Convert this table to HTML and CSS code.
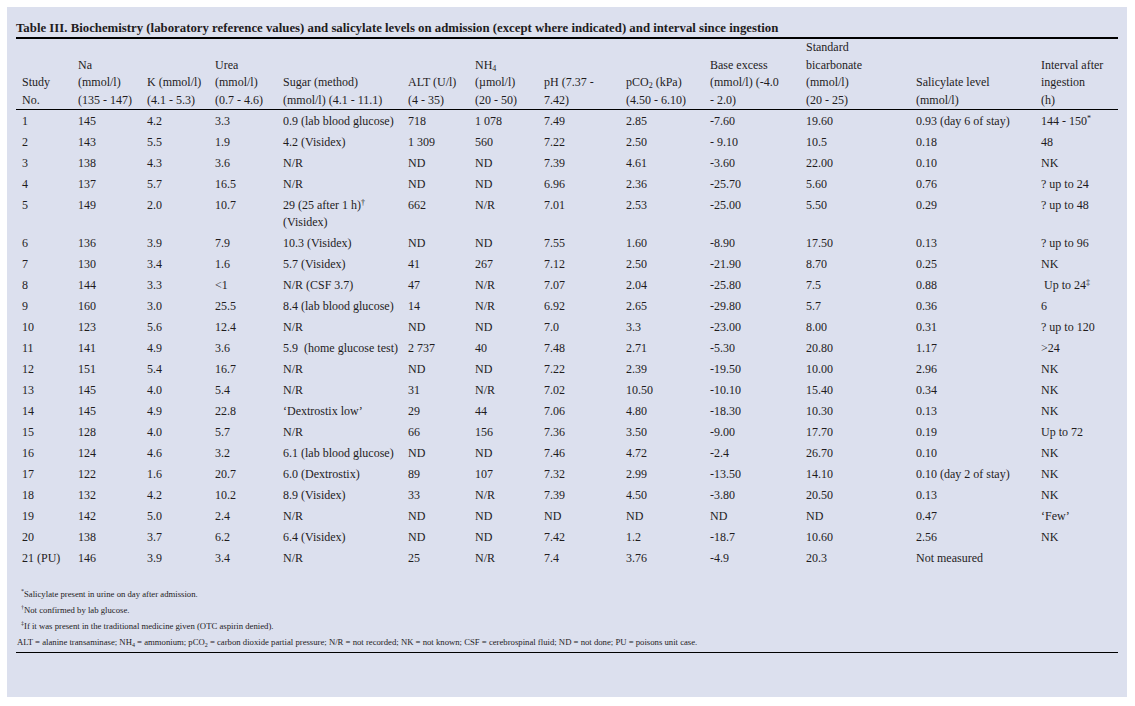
FILE: index.html
```html
<!DOCTYPE html>
<html>
<head>
<meta charset="utf-8">
<link rel="stylesheet" href="styles.css">
</head>
<body>
<div class="panel">
  <div class="title">Table III. Biochemistry (laboratory reference values) and salicylate levels on admission (except where indicated) and interval since ingestion</div>
  <table class="data">
    <colgroup>
      <col class="c1"><col class="c2"><col class="c3"><col class="c4"><col class="c5"><col class="c6"><col class="c7"><col class="c8"><col class="c9"><col class="c10"><col class="c11"><col class="c12"><col class="c13">
    </colgroup>
    <thead>
      <tr>
        <th>Study<br>No.</th>
        <th>Na<br>(mmol/l)<br>(135 - 147)</th>
        <th>K (mmol/l)<br>(4.1 - 5.3)</th>
        <th>Urea<br>(mmol/l)<br>(0.7 - 4.6)</th>
        <th>Sugar (method)<br>(mmol/l) (4.1 - 11.1)</th>
        <th>ALT (U/l)<br>(4 - 35)</th>
        <th>NH<sub>4</sub><br>(µmol/l)<br>(20 - 50)</th>
        <th>pH (7.37 -<br>7.42)</th>
        <th>pCO<sub>2</sub> (kPa)<br>(4.50 - 6.10)</th>
        <th>Base excess<br>(mmol/l) (-4.0<br>- 2.0)</th>
        <th>Standard<br>bicarbonate<br>(mmol/l)<br>(20 - 25)</th>
        <th>Salicylate level<br>(mmol/l)</th>
        <th>Interval after<br>ingestion<br>(h)</th>
      </tr>
    </thead>
    <tbody>
      <tr><td>1</td><td>145</td><td>4.2</td><td>3.3</td><td>0.9 (lab blood glucose)</td><td>718</td><td>1 078</td><td>7.49</td><td>2.85</td><td>-7.60</td><td>19.60</td><td>0.93 (day 6 of stay)</td><td>144 - 150<sup class="ast">*</sup></td></tr>
      <tr><td>2</td><td>143</td><td>5.5</td><td>1.9</td><td>4.2 (Visidex)</td><td>1 309</td><td>560</td><td>7.22</td><td>2.50</td><td>- 9.10</td><td>10.5</td><td>0.18</td><td>48</td></tr>
      <tr><td>3</td><td>138</td><td>4.3</td><td>3.6</td><td>N/R</td><td>ND</td><td>ND</td><td>7.39</td><td>4.61</td><td>-3.60</td><td>22.00</td><td>0.10</td><td>NK</td></tr>
      <tr><td>4</td><td>137</td><td>5.7</td><td>16.5</td><td>N/R</td><td>ND</td><td>ND</td><td>6.96</td><td>2.36</td><td>-25.70</td><td>5.60</td><td>0.76</td><td>? up to 24</td></tr>
      <tr><td>5</td><td>149</td><td>2.0</td><td>10.7</td><td>29 (25 after 1 h)<sup>†</sup><br>(Visidex)</td><td>662</td><td>N/R</td><td>7.01</td><td>2.53</td><td>-25.00</td><td>5.50</td><td>0.29</td><td>? up to 48</td></tr>
      <tr><td>6</td><td>136</td><td>3.9</td><td>7.9</td><td>10.3 (Visidex)</td><td>ND</td><td>ND</td><td>7.55</td><td>1.60</td><td>-8.90</td><td>17.50</td><td>0.13</td><td>? up to 96</td></tr>
      <tr><td>7</td><td>130</td><td>3.4</td><td>1.6</td><td>5.7 (Visidex)</td><td>41</td><td>267</td><td>7.12</td><td>2.50</td><td>-21.90</td><td>8.70</td><td>0.25</td><td>NK</td></tr>
      <tr><td>8</td><td>144</td><td>3.3</td><td>&lt;1</td><td>N/R (CSF 3.7)</td><td>47</td><td>N/R</td><td>7.07</td><td>2.04</td><td>-25.80</td><td>7.5</td><td>0.88</td><td class="indent">Up to 24<sup>‡</sup></td></tr>
      <tr><td>9</td><td>160</td><td>3.0</td><td>25.5</td><td>8.4 (lab blood glucose)</td><td>14</td><td>N/R</td><td>6.92</td><td>2.65</td><td>-29.80</td><td>5.7</td><td>0.36</td><td>6</td></tr>
      <tr><td>10</td><td>123</td><td>5.6</td><td>12.4</td><td>N/R</td><td>ND</td><td>ND</td><td>7.0</td><td>3.3</td><td>-23.00</td><td>8.00</td><td>0.31</td><td>? up to 120</td></tr>
      <tr><td>11</td><td>141</td><td>4.9</td><td>3.6</td><td>5.9&nbsp; (home glucose test)</td><td>2 737</td><td>40</td><td>7.48</td><td>2.71</td><td>-5.30</td><td>20.80</td><td>1.17</td><td>&gt;24</td></tr>
      <tr><td>12</td><td>151</td><td>5.4</td><td>16.7</td><td>N/R</td><td>ND</td><td>ND</td><td>7.22</td><td>2.39</td><td>-19.50</td><td>10.00</td><td>2.96</td><td>NK</td></tr>
      <tr><td>13</td><td>145</td><td>4.0</td><td>5.4</td><td>N/R</td><td>31</td><td>N/R</td><td>7.02</td><td>10.50</td><td>-10.10</td><td>15.40</td><td>0.34</td><td>NK</td></tr>
      <tr><td>14</td><td>145</td><td>4.9</td><td>22.8</td><td>‘Dextrostix low’</td><td>29</td><td>44</td><td>7.06</td><td>4.80</td><td>-18.30</td><td>10.30</td><td>0.13</td><td>NK</td></tr>
      <tr><td>15</td><td>128</td><td>4.0</td><td>5.7</td><td>N/R</td><td>66</td><td>156</td><td>7.36</td><td>3.50</td><td>-9.00</td><td>17.70</td><td>0.19</td><td>Up to 72</td></tr>
      <tr><td>16</td><td>124</td><td>4.6</td><td>3.2</td><td>6.1 (lab blood glucose)</td><td>ND</td><td>ND</td><td>7.46</td><td>4.72</td><td>-2.4</td><td>26.70</td><td>0.10</td><td>NK</td></tr>
      <tr><td>17</td><td>122</td><td>1.6</td><td>20.7</td><td>6.0 (Dextrostix)</td><td>89</td><td>107</td><td>7.32</td><td>2.99</td><td>-13.50</td><td>14.10</td><td>0.10 (day 2 of stay)</td><td>NK</td></tr>
      <tr><td>18</td><td>132</td><td>4.2</td><td>10.2</td><td>8.9 (Visidex)</td><td>33</td><td>N/R</td><td>7.39</td><td>4.50</td><td>-3.80</td><td>20.50</td><td>0.13</td><td>NK</td></tr>
      <tr><td>19</td><td>142</td><td>5.0</td><td>2.4</td><td>N/R</td><td>ND</td><td>ND</td><td>ND</td><td>ND</td><td>ND</td><td>ND</td><td>0.47</td><td>‘Few’</td></tr>
      <tr><td>20</td><td>138</td><td>3.7</td><td>6.2</td><td>6.4 (Visidex)</td><td>ND</td><td>ND</td><td>7.42</td><td>1.2</td><td>-18.7</td><td>10.60</td><td>2.56</td><td>NK</td></tr>
      <tr><td>21 (PU)</td><td>146</td><td>3.9</td><td>3.4</td><td>N/R</td><td>25</td><td>N/R</td><td>7.4</td><td>3.76</td><td>-4.9</td><td>20.3</td><td>Not measured</td><td></td></tr>
    </tbody>
  </table>
  <div class="notes">
    <p class="note"><sup>*</sup>Salicylate present in urine on day after admission.</p>
    <p class="note"><sup>†</sup>Not confirmed by lab glucose.</p>
    <p class="note"><sup>‡</sup>If it was present in the traditional medicine given (OTC aspirin denied).</p>
    <p class="note abbr">ALT = alanine transaminase; NH<sub>4</sub> = ammonium; pCO<sub>2</sub> = carbon dioxide partial pressure; N/R = not recorded; NK = not known; CSF = cerebrospinal fluid; ND = not done; PU = poisons unit case.</p>
  </div>
</div>
</body>
</html>
```

FILE: styles.css
```css
html, body {
  margin: 0;
  padding: 0;
  background: #ffffff;
}

body {
  font-family: "Liberation Serif", "Times New Roman", serif;
  color: #1f1c1d;
}

.panel {
  margin: 7px;
  width: 1120px;
  height: 690px;
  box-sizing: border-box;
  padding: 12px 9px 0 9px;
  background: #dce0ee;
}

.title {
  font-size: 12.8px;
  font-weight: bold;
  line-height: 18px;
  border-bottom: 2px solid #000;
}

.data {
  width: 1102px;
  border-collapse: collapse;
  table-layout: fixed;
  font-size: 12px;
}

.c1 { width: 56px; }
.c2 { width: 69px; }
.c3 { width: 68px; }
.c4 { width: 68px; }
.c5 { width: 125px; }
.c6 { width: 67px; }
.c7 { width: 69px; }
.c8 { width: 82px; }
.c9 { width: 84px; }
.c10 { width: 96px; }
.c11 { width: 110px; }
.c12 { width: 125px; }
.c13 { width: 83px; }

.data th {
  font-weight: normal;
  text-align: left;
  vertical-align: bottom;
  line-height: 17.5px;
  padding: 0 6px 0 6px;
  border-bottom: 1px solid #000;
}

.data td {
  text-align: left;
  vertical-align: top;
  line-height: 17px;
  padding: 3px 6px 1px 6px;
  white-space: nowrap;
}

.data sub {
  font-size: 8px;
  line-height: 0;
  vertical-align: -2px;
}

.data sup {
  font-size: 8px;
  line-height: 0;
  vertical-align: 4px;
}

.data td.indent {
  padding-left: 9px;
}

.notes {
  margin-top: 18px;
  padding-bottom: 2px;
  border-bottom: 1px solid #000;
}

.note {
  margin: 0;
  font-size: 8.7px;
  line-height: 16px;
  padding-left: 5px;
}

.note.abbr {
  padding-left: 1px;
}

.note sup {
  font-size: 6px;
  line-height: 0;
  vertical-align: 4px;
}

.note sub {
  font-size: 6px;
  line-height: 0;
  vertical-align: -2px;
}
```
